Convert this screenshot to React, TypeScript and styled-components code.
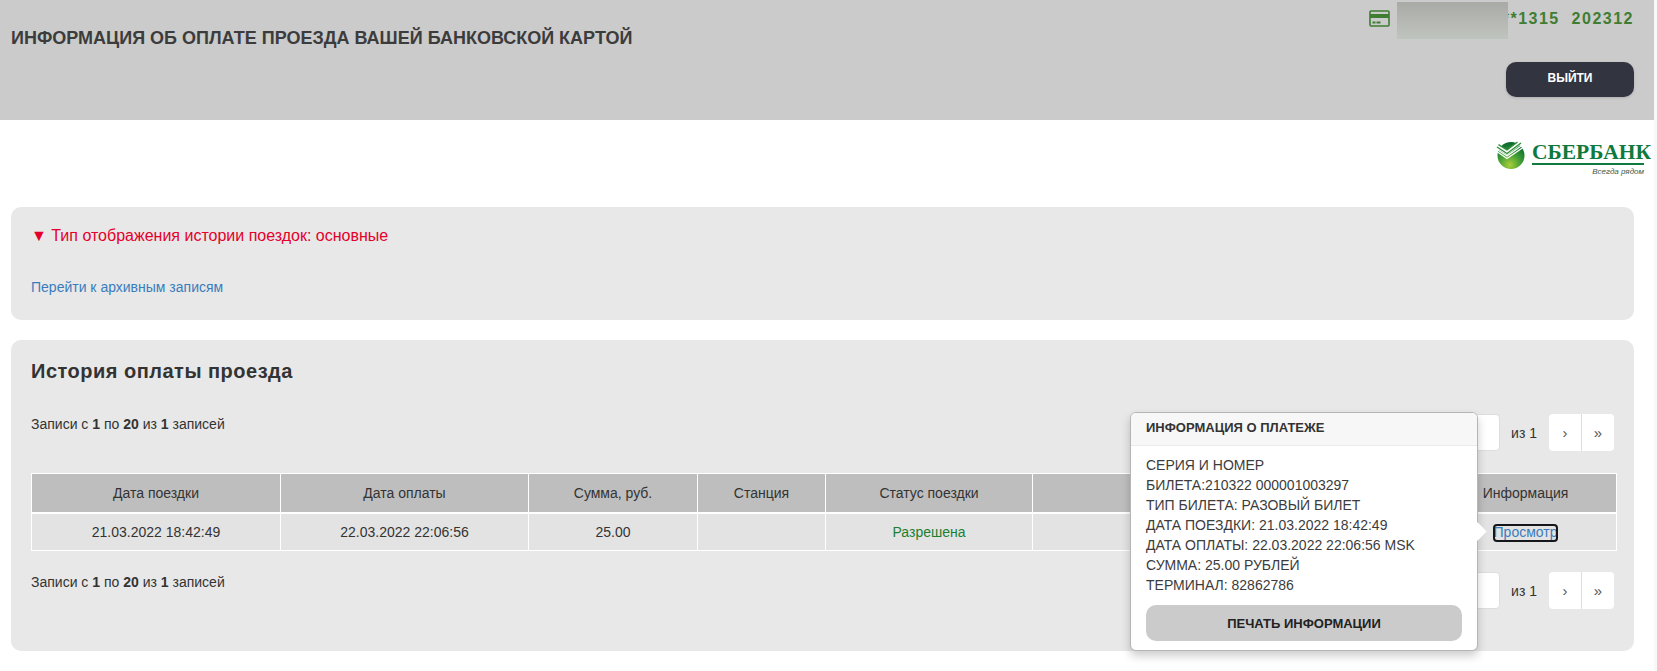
import React from 'react';
import styled, { createGlobalStyle } from 'styled-components';

const GlobalStyle = createGlobalStyle`
  html, body {
    margin: 0;
    padding: 0;
    background: #fff;
    overflow: hidden;
  }
  body {
    font-family: "Liberation Sans", Arial, sans-serif;
    font-size: 14px;
    line-height: 20px;
    color: #333;
  }
`;

const Page = styled.div`
  width: 1654px;
  height: 671px;
  background: #fff;
  border-right: 3px solid #f8f8f8;
`;

const Header = styled.header`
  display: flex;
  justify-content: space-between;
  align-items: flex-start;
  height: 120px;
  padding: 0 20px 0 11px;
  box-sizing: border-box;
  background: #cbcbcb;
`;

const Title = styled.h1`
  margin: 27px 0 0;
  font-size: 18px;
  line-height: 22px;
  font-weight: 700;
  color: #3c3c3c;
`;

const Account = styled.div`
  display: flex;
  flex-direction: column;
  align-items: flex-end;
`;

const CardRow = styled.div`
  display: flex;
  align-items: flex-start;
  height: 62px;
`;

const CardIcon = styled.svg`
  width: 21px;
  height: 17px;
  margin: 10px 7px 0 0;
`;

const Masked = styled.div`
  width: 111px;
  height: 37px;
  margin-top: 2px;
  background: linear-gradient(#a8aaa6, #c0c4be);
  position: relative;
  z-index: 1;
`;

const CardNumber = styled.div`
  margin: 9px 0 0 -5px;
  font-size: 16px;
  line-height: 20px;
  font-weight: 700;
  letter-spacing: 1.5px;
  white-space: pre;
  color: #3f7d32;
`;

const LogoutButton = styled.button`
  width: 128px;
  height: 35px;
  padding: 0 0 3px;
  border: 0;
  border-radius: 10px;
  background: #323440;
  color: #fff;
  font-family: inherit;
  font-size: 12px;
  font-weight: 700;
  box-shadow: 0 1px 3px rgba(0, 0, 0, 0.15);
`;

const LogoRow = styled.div`
  display: flex;
  justify-content: flex-end;
  gap: 7px;
  height: 37px;
  padding: 21px 10px 0 0;
  margin-bottom: 29px;
`;

const Emblem = styled.svg`
  width: 29px;
  height: 28px;
`;

const LogoText = styled.div`
  display: flex;
  flex-direction: column;
  width: 112px;
`;

const LogoName = styled.div`
  font-family: "Liberation Serif", "Times New Roman", serif;
  font-size: 21.5px;
  line-height: 22px;
  font-weight: 700;
  color: #0f7a3e;
  white-space: nowrap;
`;

const LogoRule = styled.div`
  height: 2px;
  background: #0f7a3e;
`;

const LogoSlogan = styled.div`
  margin-top: 2px;
  font-size: 8px;
  line-height: 10px;
  font-style: italic;
  text-align: right;
  color: #3c5a48;
`;

const Panel = styled.section`
  position: relative;
  margin: 0 20px 20px 11px;
  padding: 19px 20px 23px 20px;
  background: #e8e8e8;
  border-radius: 10px;
`;

const ModeLabel = styled.div`
  font-size: 16px;
  color: #e4002b;
  margin-bottom: 31px;
`;

const TextLink = styled.a`
  color: #3a7cbd;
  text-decoration: none;
`;

const HistoryPanel = styled(Panel)`
  padding: 20px 20px 42px 20px;
`;

const HistoryTitle = styled.h2`
  margin: 0 0 32px;
  font-size: 20px;
  line-height: 22px;
  font-weight: 700;
  letter-spacing: 0.5px;
  color: #333;
`;

const PagerRow = styled.div`
  display: flex;
  justify-content: space-between;
  align-items: flex-start;
`;

const PagerControls = styled.div`
  display: flex;
  align-items: center;
  height: 37px;
`;

const PageInput = styled.div`
  width: 60px;
  height: 35px;
  background: #fff;
  border: 1px solid #ddd;
  border-radius: 4px;
`;

const PageCount = styled.span`
  margin: 0 12px 0 11px;
  font-size: 14px;
`;

const PageButtons = styled.div`
  display: flex;
  height: 37px;
  background: #fff;
  border-radius: 4px;
`;

const PageButton = styled.div<{ $divided?: boolean }>`
  display: flex;
  align-items: center;
  justify-content: center;
  width: 32px;
  height: 37px;
  border-left: ${(p) => (p.$divided ? '1px solid #ddd' : '0')};
  color: #555;
  font-size: 15px;
`;

const HistoryTable = styled.table`
  width: 1585px;
  margin: 22px 0 21px;
  border-collapse: collapse;
  table-layout: fixed;
  border: 1px solid #fff;
`;

const HeadCell = styled.th`
  height: 38px;
  padding: 0;
  background: #bebebe;
  border: 1px solid #fff;
  border-bottom-width: 2px;
  font-weight: 400;
  font-size: 14px;
  color: #333;
`;

const Cell = styled.td<{ $status?: boolean }>`
  height: 36px;
  padding: 0;
  background: #e3e3e3;
  border: 1px solid #fff;
  text-align: center;
  font-size: 14px;
  color: ${(p) => (p.$status ? '#1d7f2e' : '#333')};
`;

const ViewLink = styled.a`
  display: inline-block;
  line-height: 15px;
  color: #3a7cbd;
  border-bottom: 1px dotted #3a7cbd;
  outline: 2px solid #14161a;
  outline-offset: -1px;
  border-radius: 3px;
`;

const Popover = styled.div`
  position: absolute;
  top: 72px;
  right: 156px;
  width: 348px;
  height: 239px;
  box-sizing: border-box;
  background: #fff;
  border: 1px solid #b5b5b5;
  border-radius: 6px;
  box-shadow: 0 5px 10px rgba(0, 0, 0, 0.2);
`;

const PopoverArrow = styled.div`
  position: absolute;
  top: 112px;
  right: -7px;
  width: 13px;
  height: 13px;
  background: #fff;
  transform: rotate(45deg);
`;

const PopoverTitle = styled.div`
  height: 33px;
  padding: 5px 15px 0;
  box-sizing: border-box;
  background: #f7f7f7;
  border-bottom: 1px solid #ebebeb;
  border-radius: 5px 5px 0 0;
  font-size: 13px;
  line-height: 20px;
  font-weight: 700;
  color: #333;
`;

const PopoverBody = styled.div`
  position: relative;
  padding: 9px 15px 0;
  font-size: 14px;
  line-height: 20px;
  color: #3c3c3c;
`;

const PrintButton = styled.button`
  display: block;
  width: 100%;
  height: 36px;
  margin-top: 10px;
  padding: 0;
  border: 0;
  border-radius: 10px;
  background: #cbcbcb;
  color: #222;
  font-family: inherit;
  font-size: 13px;
  font-weight: 700;
`;

const columns = [249, 248, 169, 128, 207, 402, 182];
const headings = ['Дата поездки', 'Дата оплаты', 'Сумма, руб.', 'Станция', 'Статус поездки', '', 'Информация'];

const paymentInfo = [
  'СЕРИЯ И НОМЕР',
  'БИЛЕТА:210322 000001003297',
  'ТИП БИЛЕТА: РАЗОВЫЙ БИЛЕТ',
  'ДАТА ПОЕЗДКИ: 21.03.2022 18:42:49',
  'ДАТА ОПЛАТЫ: 22.03.2022 22:06:56 MSK',
  'СУММА: 25.00 РУБЛЕЙ',
  'ТЕРМИНАЛ: 82862786',
];

const Pager = () => (
  <PagerRow>
    <div>
      Записи с <b>1</b> по <b>20</b> из <b>1</b> записей
    </div>
    <PagerControls>
      <PageInput />
      <PageCount>из 1</PageCount>
      <PageButtons>
        <PageButton>›</PageButton>
        <PageButton $divided>»</PageButton>
      </PageButtons>
    </PagerControls>
  </PagerRow>
);

const App = () => {
  return (
    <Page>
      <GlobalStyle />
      <Header>
        <Title>ИНФОРМАЦИЯ ОБ ОПЛАТЕ ПРОЕЗДА ВАШЕЙ БАНКОВСКОЙ КАРТОЙ</Title>
        <Account>
          <CardRow>
            <CardIcon viewBox="0 0 21 17">
              <rect x="1" y="1" width="19" height="15" rx="1" fill="none" stroke="#3f7d32" strokeWidth="1.6" />
              <rect x="1" y="4" width="19" height="4" fill="#3f7d32" />
              <rect x="3.5" y="11.5" width="3" height="2" fill="#3f7d32" />
              <rect x="7.5" y="11.5" width="4" height="2" fill="#3f7d32" />
            </CardIcon>
            <Masked />
            <CardNumber>**1315  202312</CardNumber>
          </CardRow>
          <LogoutButton>ВЫЙТИ</LogoutButton>
        </Account>
      </Header>

      <LogoRow>
        <Emblem viewBox="0 0 29 28">
          <defs>
            <radialGradient id="ball" cx="0.45" cy="0.85" r="0.8">
              <stop offset="0" stopColor="#a8cf3a" />
              <stop offset="0.55" stopColor="#3d9a35" />
              <stop offset="1" stopColor="#0c6b2f" />
            </radialGradient>
          </defs>
          <circle cx="15" cy="14.5" r="13.5" fill="url(#ball)" />
          <path d="M0 7 L11 14 L27 2 L23 0 L11 9 L3 4 Z" fill="#fff" />
          <path d="M1 8.5 L11 15 L28 3" fill="none" stroke="#fff" strokeWidth="1.2" />
          <path d="M1 6 L11 12.5 L25 2 M2.5 3.6 L11 9 L21.5 1" fill="none" stroke="#2f8f3a" strokeWidth="1.4" />
          <path d="M1.5 11 L11 17.5 L28.5 5.5" fill="none" stroke="#fff" strokeWidth="1.4" />
        </Emblem>
        <LogoText>
          <LogoName>СБЕРБАНК</LogoName>
          <LogoRule />
          <LogoSlogan>Всегда рядом</LogoSlogan>
        </LogoText>
      </LogoRow>

      <Panel>
        <ModeLabel>▼ Тип отображения истории поездок: основные</ModeLabel>
        <TextLink>Перейти к архивным записям</TextLink>
      </Panel>

      <HistoryPanel>
        <HistoryTitle>История оплаты проезда</HistoryTitle>
        <Pager />
        <HistoryTable>
          <colgroup>
            {columns.map((width, i) => (
              <col key={i} width={width} />
            ))}
          </colgroup>
          <thead>
            <tr>
              {headings.map((heading, i) => (
                <HeadCell key={i}>{heading}</HeadCell>
              ))}
            </tr>
          </thead>
          <tbody>
            <tr>
              <Cell>21.03.2022 18:42:49</Cell>
              <Cell>22.03.2022 22:06:56</Cell>
              <Cell>25.00</Cell>
              <Cell />
              <Cell $status>Разрешена</Cell>
              <Cell />
              <Cell>
                <ViewLink>Просмотр</ViewLink>
              </Cell>
            </tr>
          </tbody>
        </HistoryTable>
        <Pager />

        <Popover>
          <PopoverArrow />
          <PopoverTitle>ИНФОРМАЦИЯ О ПЛАТЕЖЕ</PopoverTitle>
          <PopoverBody>
            {paymentInfo.map((line) => (
              <div key={line}>{line}</div>
            ))}
            <PrintButton>ПЕЧАТЬ ИНФОРМАЦИИ</PrintButton>
          </PopoverBody>
        </Popover>
      </HistoryPanel>
    </Page>
  );
};

export default App;
